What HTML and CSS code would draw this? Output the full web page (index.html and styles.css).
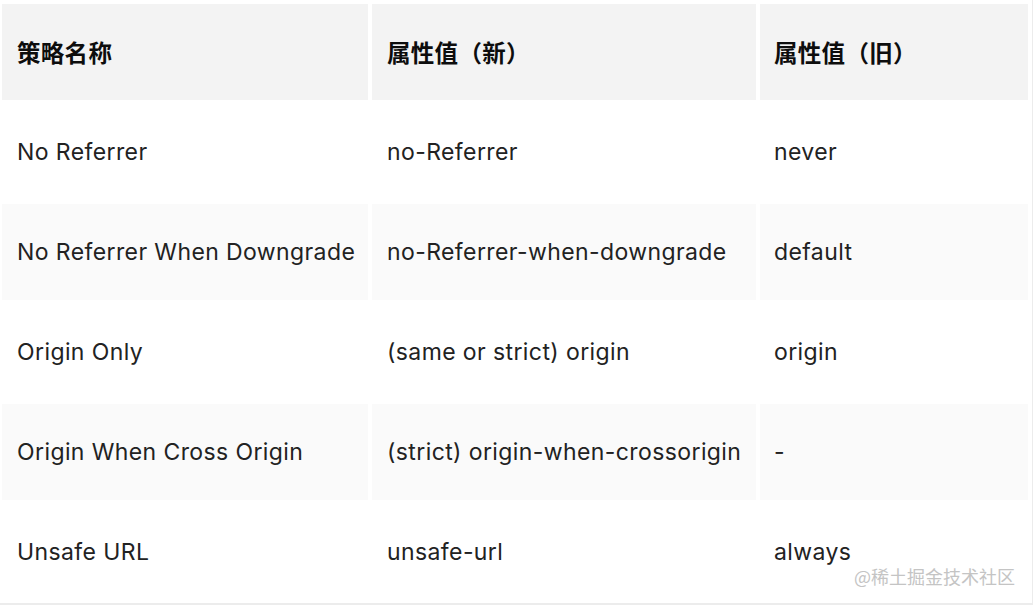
FILE: index.html
```html
<!DOCTYPE html>
<html lang="zh">
<head>
<meta charset="utf-8">
<link rel="stylesheet" href="styles.css">
</head>
<body>
<div class="frame">
  <div class="table">
    <div class="row head">
      <div class="cell">策略名称</div>
      <div class="cell">属性值（新）</div>
      <div class="cell">属性值（旧）</div>
    </div>
    <div class="row">
      <div class="cell">No Referrer</div>
      <div class="cell">no-Referrer</div>
      <div class="cell">never</div>
    </div>
    <div class="row alt">
      <div class="cell">No Referrer When Downgrade</div>
      <div class="cell">no-Referrer-when-downgrade</div>
      <div class="cell">default</div>
    </div>
    <div class="row">
      <div class="cell">Origin Only</div>
      <div class="cell">(same or strict) origin</div>
      <div class="cell">origin</div>
    </div>
    <div class="row alt">
      <div class="cell">Origin When Cross Origin</div>
      <div class="cell">(strict) origin-when-crossorigin</div>
      <div class="cell">-</div>
    </div>
    <div class="row">
      <div class="cell">Unsafe URL</div>
      <div class="cell">unsafe-url</div>
      <div class="cell">always</div>
    </div>
  </div>
  <div class="watermark">@稀土掘金技术社区</div>
</div>
</body>
</html>
```
FILE: styles.css
```css
html, body {
  margin: 0;
  padding: 0;
  background: #ffffff;
}
.frame {
  position: relative;
  width: 1032px;
  height: 603px;
  border-right: 1px solid #ececec;
  border-bottom: 2px solid #ececec;
  box-sizing: content-box;
  font-family: Inter, "Noto Sans CJK SC", sans-serif;
}
.table {
  display: flex;
  flex-direction: column;
  gap: 4px;
  padding: 4px 0 0 2px;
}
.row {
  display: grid;
  grid-template-columns: 366px 384px 268px;
  column-gap: 4px;
  height: 96px;
}
.cell {
  display: flex;
  align-items: center;
  padding-left: 15px;
  font-size: 23px;
  letter-spacing: 0.4px;
  color: #222;
  white-space: nowrap;
}
.head .cell {
  background: #f3f3f3;
  font-family: "Noto Sans CJK SC", sans-serif;
  font-weight: 700;
  color: #0d0d0d;
  font-size: 23.5px;
  letter-spacing: 0.3px;
}
.alt .cell {
  background: #fafafa;
}
.row .cell:nth-child(3) {
  padding-left: 14px;
}
.watermark {
  position: absolute;
  right: 17px;
  top: 563px;
  font-family: "Noto Sans CJK SC", sans-serif;
  font-size: 18px;
  color: #c4c4c4;
}
```
